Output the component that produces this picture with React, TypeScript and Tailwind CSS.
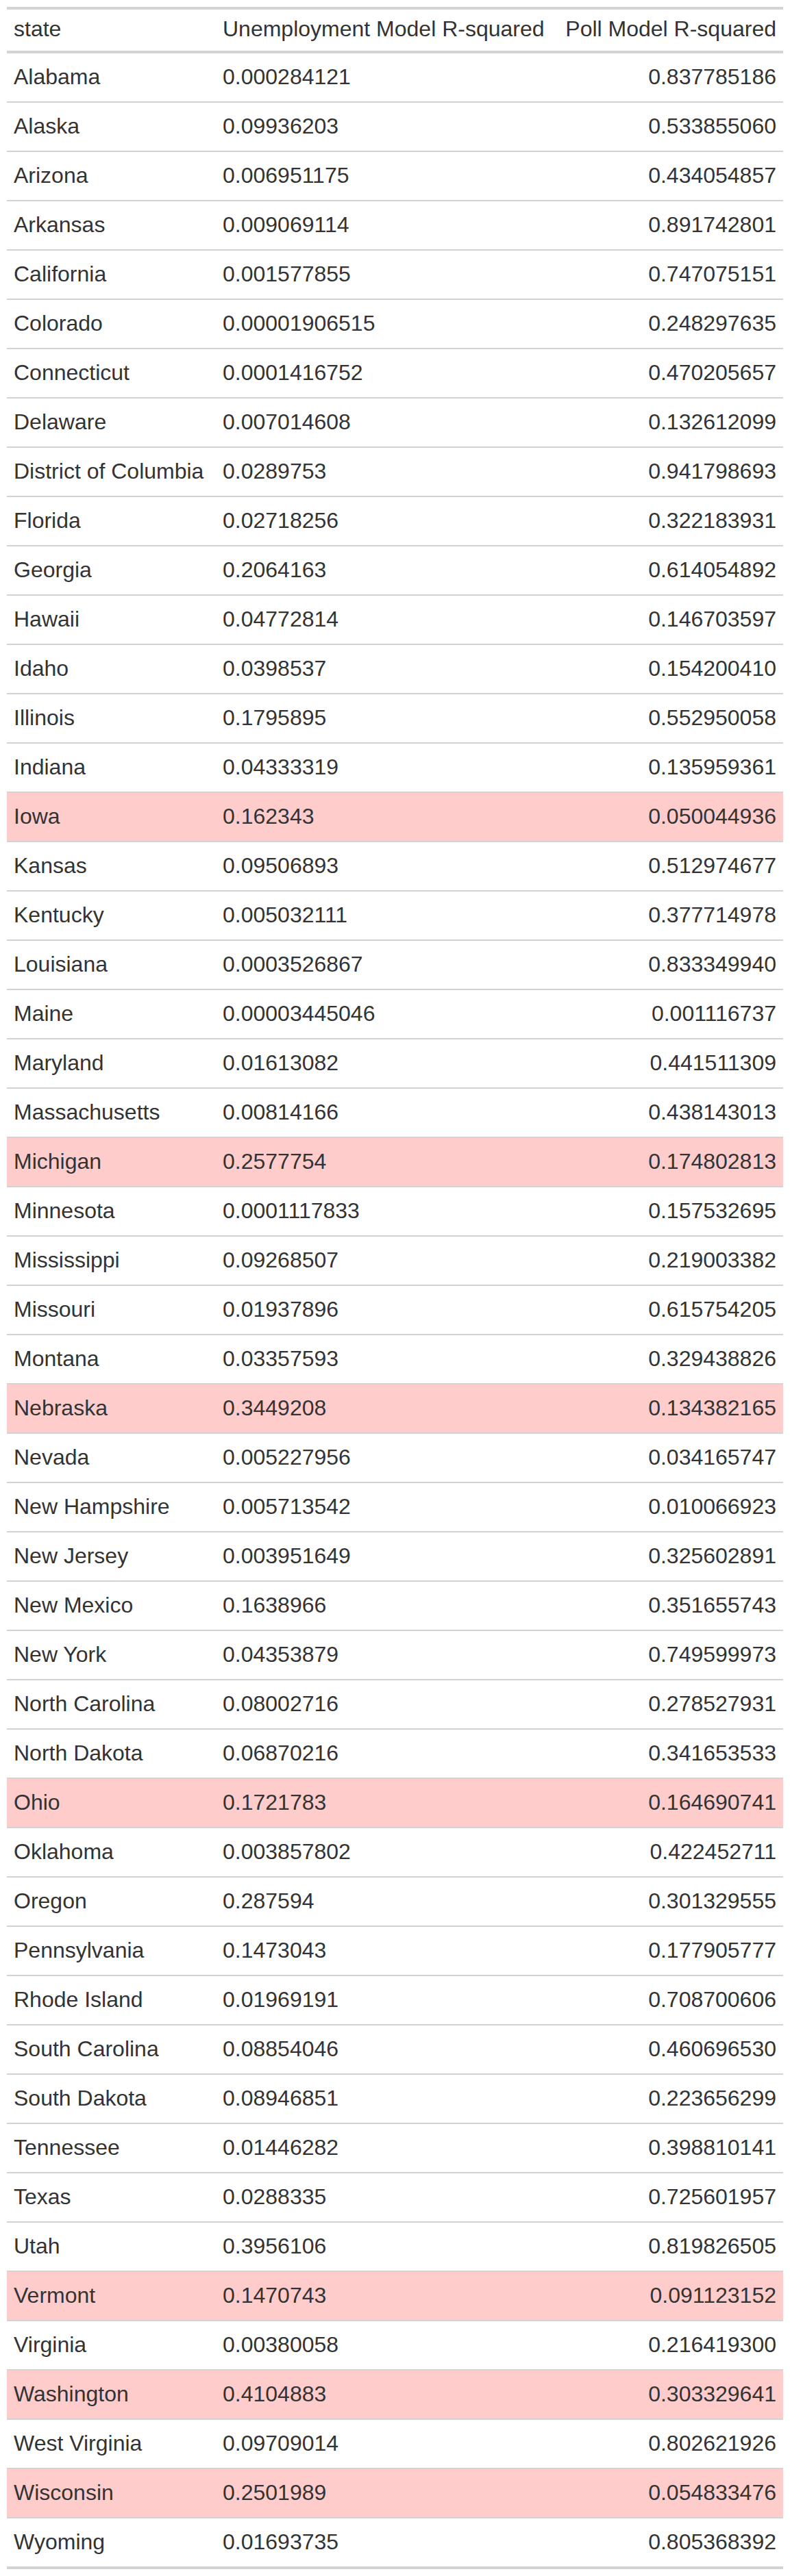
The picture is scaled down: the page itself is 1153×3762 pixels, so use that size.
const rows: [string, string, string, boolean?][] = [
  ["Alabama", "0.000284121", "0.837785186"],
  ["Alaska", "0.09936203", "0.533855060"],
  ["Arizona", "0.006951175", "0.434054857"],
  ["Arkansas", "0.009069114", "0.891742801"],
  ["California", "0.001577855", "0.747075151"],
  ["Colorado", "0.00001906515", "0.248297635"],
  ["Connecticut", "0.0001416752", "0.470205657"],
  ["Delaware", "0.007014608", "0.132612099"],
  ["District of Columbia", "0.0289753", "0.941798693"],
  ["Florida", "0.02718256", "0.322183931"],
  ["Georgia", "0.2064163", "0.614054892"],
  ["Hawaii", "0.04772814", "0.146703597"],
  ["Idaho", "0.0398537", "0.154200410"],
  ["Illinois", "0.1795895", "0.552950058"],
  ["Indiana", "0.04333319", "0.135959361"],
  ["Iowa", "0.162343", "0.050044936", true],
  ["Kansas", "0.09506893", "0.512974677"],
  ["Kentucky", "0.005032111", "0.377714978"],
  ["Louisiana", "0.0003526867", "0.833349940"],
  ["Maine", "0.00003445046", "0.001116737"],
  ["Maryland", "0.01613082", "0.441511309"],
  ["Massachusetts", "0.00814166", "0.438143013"],
  ["Michigan", "0.2577754", "0.174802813", true],
  ["Minnesota", "0.0001117833", "0.157532695"],
  ["Mississippi", "0.09268507", "0.219003382"],
  ["Missouri", "0.01937896", "0.615754205"],
  ["Montana", "0.03357593", "0.329438826"],
  ["Nebraska", "0.3449208", "0.134382165", true],
  ["Nevada", "0.005227956", "0.034165747"],
  ["New Hampshire", "0.005713542", "0.010066923"],
  ["New Jersey", "0.003951649", "0.325602891"],
  ["New Mexico", "0.1638966", "0.351655743"],
  ["New York", "0.04353879", "0.749599973"],
  ["North Carolina", "0.08002716", "0.278527931"],
  ["North Dakota", "0.06870216", "0.341653533"],
  ["Ohio", "0.1721783", "0.164690741", true],
  ["Oklahoma", "0.003857802", "0.422452711"],
  ["Oregon", "0.287594", "0.301329555"],
  ["Pennsylvania", "0.1473043", "0.177905777"],
  ["Rhode Island", "0.01969191", "0.708700606"],
  ["South Carolina", "0.08854046", "0.460696530"],
  ["South Dakota", "0.08946851", "0.223656299"],
  ["Tennessee", "0.01446282", "0.398810141"],
  ["Texas", "0.0288335", "0.725601957"],
  ["Utah", "0.3956106", "0.819826505"],
  ["Vermont", "0.1470743", "0.091123152", true],
  ["Virginia", "0.00380058", "0.216419300"],
  ["Washington", "0.4104883", "0.303329641", true],
  ["West Virginia", "0.09709014", "0.802621926"],
  ["Wisconsin", "0.2501989", "0.054833476", true],
  ["Wyoming", "0.01693735", "0.805368392"],
];

export default function App() {
  return (
    <div className="bg-white px-[10px] pt-[10px] font-['Liberation_Sans',Arial,sans-serif] text-[32px] leading-[37px] text-[#333333]">
      <table className="w-full table-fixed border-separate border-spacing-0">
        <colgroup>
          <col className="w-[305px]" />
          <col className="w-[498px]" />
          <col className="w-[330px]" />
        </colgroup>
        <thead>
          <tr>
            <th className="border-y-4 border-[#D3D3D3] px-[10px] pt-[10px] pb-[13px] text-left font-normal whitespace-nowrap">
              state
            </th>
            <th className="border-y-4 border-[#D3D3D3] px-[10px] pt-[10px] pb-[13px] text-left font-normal whitespace-nowrap">
              Unemployment Model R-squared
            </th>
            <th className="border-y-4 border-[#D3D3D3] px-[10px] pt-[10px] pb-[13px] text-right font-normal whitespace-nowrap">
              Poll Model R-squared
            </th>
          </tr>
        </thead>
        <tbody>
          {rows.map(([state, unemp, poll, hi], i) => {
            const last = i === rows.length - 1;
            const cell = last
              ? "border-b-4 border-[#D3D3D3] px-[10px] pt-[16px] pb-[17px] whitespace-nowrap"
              : "border-b-2 border-[#D3D3D3] px-[10px] pt-[16px] pb-[17px] whitespace-nowrap";
            return (
              <tr key={state} className={hi ? "bg-[#FFCCCC]" : "bg-white"}>
                <td className={cell}>{state}</td>
                <td className={cell}>{unemp}</td>
                <td className={cell + " text-right"}>{poll}</td>
              </tr>
            );
          })}
        </tbody>
      </table>
    </div>
  );
}
